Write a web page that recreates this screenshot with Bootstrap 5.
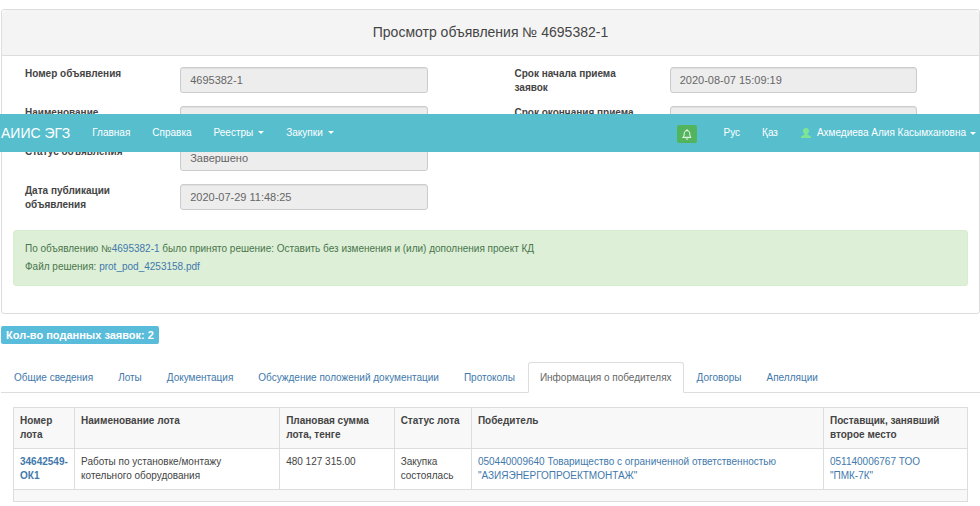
<!DOCTYPE html>
<html lang="ru">
<head>
<meta charset="utf-8">
<meta name="viewport" content="width=device-width, initial-scale=1">
<title>Просмотр объявления № 4695382-1</title>
<link href="https://cdn.jsdelivr.net/npm/bootstrap@5.3.0/dist/css/bootstrap.min.css" rel="stylesheet">
<style>
body { font-family: "Liberation Sans", Arial, sans-serif; font-size: 10px; line-height: 14px; color: #444; background: #fff; }
a { color: #4279ab; text-decoration: none; }
main { padding: 9px 0 4px 1px; }

.site-bar { top: 114px; height: 38px; z-index: 1030; background: #57bece; padding: 0 0 0 1px; }
.site-bar .navbar-brand { font-size: 14px; line-height: 20px; color: #fff; padding: 0; margin: 0 11px 0 0; }
.site-bar .navbar-nav .nav-link { color: #fff; padding: 12px 11px; line-height: 14px; }
.site-bar .dropdown-toggle::after { margin-left: 5px; border-width: 3px; border-bottom: 0; vertical-align: 2px; }
.site-bar .navbar-nav .user-link { padding: 12px 4px 12px 12px; gap: 6px; }
.site-bar .user-link::after { margin-left: -2px; }
.bell-btn { width: 20px; height: 18px; padding: 0; border: 0; border-radius: 2px; background: #52b45c; margin: 2px 16px 0 0; }

.notice { border-color: #ddd; border-radius: 3px; }
.notice .card-header { background: #f4f4f4; border-color: #ddd; padding: 14px 12px; }
.notice .card-header h1 { font-size: 14px; line-height: 17px; color: #444; font-weight: 400; }
.notice .card-body { padding: 11px 11px 12px; }
.field-row { min-height: 28px; margin-bottom: 11px; }
.field-row label { font-weight: 700; }
.field-row .form-control { height: 26px; padding: 4px 9px; font-size: 11px; line-height: 16px; color: #666; background: #ededed; border-color: #ccc; border-radius: 3px; box-shadow: inset 0 1px 1px rgba(0,0,0,.06); }
.decision { margin: 7px 0 15px; padding: 9px 11px; line-height: 18px; background: #ddefd7; border-color: #d8ecce; color: #49764b; border-radius: 3px; }

.count-line { margin: 12px 0 18px; }
.bid-count { font-size: 11px; line-height: 14px; padding: 2px 5px; background: #5abcdb; border-radius: 2px; }

.nav-tabs { border-color: #ddd; padding-left: 1px; }
.nav-tabs .nav-link { color: #4279ab; padding: 7px 11px; line-height: 15px; border-radius: 3px 3px 0 0; margin-right: 1px; }
.nav-tabs .nav-link.active { color: #666; border-color: #ddd #ddd #fff; }

.table-wrap { padding: 14px 12px 0; }
.winners { table-layout: fixed; border-color: #ddd; color: #444; }
.winners > :not(caption) > * > * { padding: 6px; color: #444; }
.winners thead th, .winners tfoot td { background: #f8f8f8; vertical-align: top; }
.winners > tfoot > tr > td { height: 12px; padding: 0; }
.w-num { width: 6.4%; }
.w-name { width: 21.5%; }
.w-sum { width: 12%; }
.w-status { width: 8.1%; }
.w-second { width: 15.1%; }
</style>
</head>
<body>
<nav class="navbar navbar-expand site-bar position-absolute w-100">
  <a class="navbar-brand" href="#">АИИС ЭГЗ</a>
  <ul class="navbar-nav">
    <li class="nav-item"><a class="nav-link" href="#">Главная</a></li>
    <li class="nav-item"><a class="nav-link" href="#">Справка</a></li>
    <li class="nav-item dropdown"><a class="nav-link dropdown-toggle" href="#" data-bs-toggle="dropdown">Реестры</a></li>
    <li class="nav-item dropdown"><a class="nav-link dropdown-toggle" href="#" data-bs-toggle="dropdown">Закупки</a></li>
  </ul>
  <ul class="navbar-nav ms-auto align-items-center">
    <li class="nav-item"><button type="button" class="btn bell-btn d-flex align-items-center justify-content-center" aria-label="Уведомления">
      <svg width="10" height="11" viewBox="0 0 10 11" fill="none" stroke="#fff" stroke-linejoin="round" stroke-linecap="round"><path d="M5 .6v.8M1 8.300h8C7.800 7.400 7.900 6.400 7.800 4.600 7.700 2.700 6.600 1.600 5 1.600S2.300 2.700 2.200 4.600C2.100 6.400 2.200 7.400 1 8.300z"/><path d="M4 9.800c.4.6 1.600.6 2 0"/></svg>
    </button></li>
    <li class="nav-item"><a class="nav-link" href="#">Рус</a></li>
    <li class="nav-item"><a class="nav-link" href="#">Қаз</a></li>
    <li class="nav-item dropdown"><a class="nav-link dropdown-toggle user-link d-flex align-items-center" href="#" data-bs-toggle="dropdown">
      <svg width="10" height="10" viewBox="0 0 10 10" fill="#7fe593"><path d="M5 0C3.100 0 2 1.100 2 2.800c0 1.400.6 2.400 1.400 3v1C3.200 7.500 0 7.500 0 9.200V10h10v-.8C10 7.500 6.800 7.500 6.600 6.800v-1c.8-.6 1.400-1.600 1.400-3C8 1.100 6.900 0 5 0z"/></svg>
      <span>Ахмедиева Алия Касымхановна</span></a></li>
  </ul>
</nav>

<main>
  <section class="card notice">
    <div class="card-header text-center"><h1 class="m-0">Просмотр объявления № 4695382-1</h1></div>
    <div class="card-body">
      <form class="row">
        <div class="col-6">
          <div class="row mx-0 field-row"><label class="col-4" for="num">Номер объявления</label><div class="col-7"><input class="form-control" id="num" value="4695382-1" readonly></div></div>
          <div class="row mx-0 field-row"><label class="col-4" for="name">Наименование объявления</label><div class="col-7"><input class="form-control" id="name" readonly></div></div>
          <div class="row mx-0 field-row"><label class="col-4" for="status">Статус объявления</label><div class="col-7"><input class="form-control" id="status" value="Завершено" readonly></div></div>
          <div class="row mx-0 field-row"><label class="col-4" for="pub">Дата публикации объявления</label><div class="col-7"><input class="form-control" id="pub" value="2020-07-29 11:48:25" readonly></div></div>
        </div>
        <div class="col-6">
          <div class="row mx-0 field-row"><label class="col-4" for="start">Срок начала приема заявок</label><div class="col-7"><input class="form-control" id="start" value="2020-08-07 15:09:19" readonly></div></div>
          <div class="row mx-0 field-row"><label class="col-4" for="end">Срок окончания приема заявок</label><div class="col-7"><input class="form-control" id="end" readonly></div></div>
        </div>
      </form>
      <div class="alert decision">
        <div>По объявлению №<a href="#">4695382-1</a> было принято решение: Оставить без изменения и (или) дополнения проект КД</div>
        <div>Файл решения: <a href="#">prot_pod_4253158.pdf</a></div>
      </div>
    </div>
  </section>

  <div class="count-line d-flex"><span class="badge bid-count">Кол-во поданных заявок: 2</span></div>

  <ul class="nav nav-tabs">
    <li class="nav-item"><a class="nav-link" href="#">Общие сведения</a></li>
    <li class="nav-item"><a class="nav-link" href="#">Лоты</a></li>
    <li class="nav-item"><a class="nav-link" href="#">Документация</a></li>
    <li class="nav-item"><a class="nav-link" href="#">Обсуждение положений документации</a></li>
    <li class="nav-item"><a class="nav-link" href="#">Протоколы</a></li>
    <li class="nav-item"><a class="nav-link active" href="#" aria-current="page">Информация о победителях</a></li>
    <li class="nav-item"><a class="nav-link" href="#">Договоры</a></li>
    <li class="nav-item"><a class="nav-link" href="#">Апелляции</a></li>
  </ul>

  <div class="table-wrap">
    <table class="table table-bordered winners mb-0">
      <thead><tr><th class="w-num">Номер лота</th><th class="w-name">Наименование лота</th><th class="w-sum">Плановая сумма лота, тенге</th><th class="w-status">Статус лота</th><th>Победитель</th><th class="w-second">Поставщик, занявший второе место</th></tr></thead>
      <tbody><tr><td><a class="fw-bold" href="#">34642549-ОК1</a></td><td>Работы по установке/монтажу котельного оборудования</td><td>480 127 315.00</td><td>Закупка состоялась</td><td><a href="#">050440009640 Товарищество с ограниченной ответственностью "АЗИЯЭНЕРГОПРОЕКТМОНТАЖ"</a></td><td><a href="#">051140006767 ТОО "ПМК-7К"</a></td></tr></tbody>
      <tfoot><tr><td colspan="6"></td></tr></tfoot>
    </table>
  </div>
</main>
<script src="https://cdn.jsdelivr.net/npm/bootstrap@5.3.0/dist/js/bootstrap.bundle.min.js"></script>
</body>
</html>
